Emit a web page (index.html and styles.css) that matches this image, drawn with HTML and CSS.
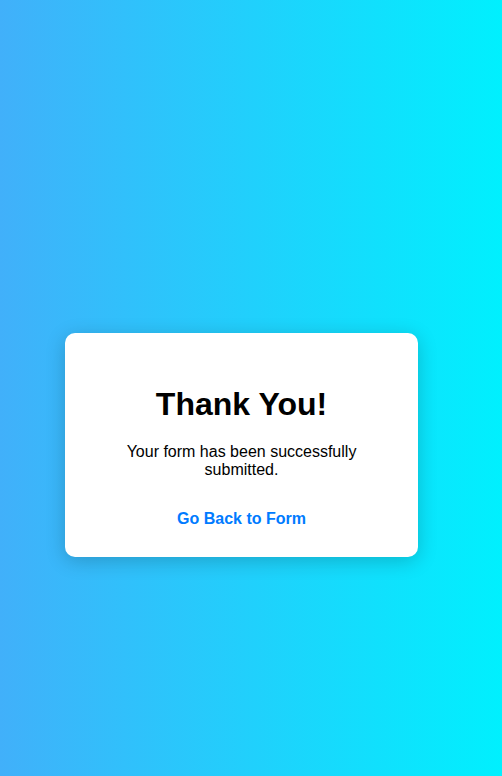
FILE: index.html
```html
<!DOCTYPE html>
<html lang="en">
<head>
<meta charset="utf-8">
<title>Thank You</title>
<link rel="stylesheet" href="styles.css">
</head>
<body>
<main class="page">
  <section class="card">
    <h1 class="title">Thank You!</h1>
    <p class="message">Your form has been successfully submitted.</p>
    <a class="back-link" href="#">Go Back to Form</a>
  </section>
</main>
</body>
</html>
```
FILE: styles.css
```css
html, body {
  margin: 0;
  height: 100%;
}
body {
  font-family: "Liberation Sans", Arial, Helvetica, sans-serif;
  background: linear-gradient(to right, #41b0fa 0%, #00f0fe 100%);
  color: #000;
}
.page {
  box-sizing: border-box;
  min-height: 100%;
  padding: 333px 0 0 65px;
}
.card {
  box-sizing: border-box;
  width: 353px;
  height: 224px;
  background: #fff;
  border-radius: 10px;
  padding: 30px 40px;
  text-align: center;
  box-shadow: 0 4px 20px rgba(0, 0, 0, 0.2);
}
.title {
  margin: 23px 0 20px;
  font-size: 32px;
  font-weight: bold;
  line-height: 37px;
}
.message {
  margin: 0;
  font-size: 16px;
  line-height: 18px;
}
.back-link {
  display: inline-block;
  margin-top: 31px;
  font-size: 16px;
  line-height: 18px;
  font-weight: bold;
  color: #007bff;
  text-decoration: none;
}
```
